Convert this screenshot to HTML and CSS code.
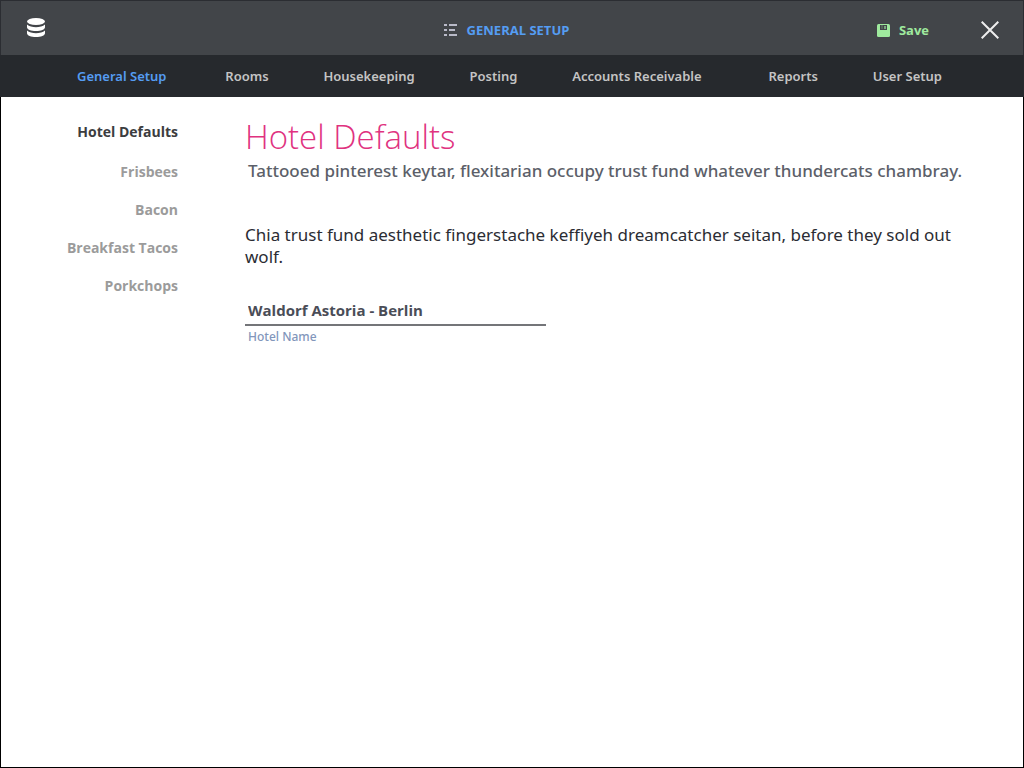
FILE: index.html
```html
<!DOCTYPE html>
<html lang="en">
<head>
<meta charset="utf-8">
<title>General Setup</title>
<link rel="stylesheet" href="styles.css">
</head>
<body>
<div class="app">
  <header class="topbar">
    <a class="logo" href="#" aria-label="Home">
      <svg width="20" height="20" viewBox="0 0 20 20" fill="currentColor" aria-hidden="true"><ellipse cx="10" cy="3.500" rx="9" ry="3.500"/><path d="M1 6.500c2 2 5.500 2.700 9 2.700s7-.7 9-2.700v2.700c0 2.300-4 3.800-9 3.800s-9-1.500-9-3.800z"/><path d="M1 12.500c2 2 5.500 2.700 9 2.700s7-.7 9-2.700v2.700c0 2.300-4 3.800-9 3.800s-9-1.500-9-3.800z"/></svg>
    </a>
    <h1 class="title">
      <svg width="13" height="12" viewBox="0 0 13 12" fill="#b9bac8" aria-hidden="true"><path d="M0 0h3v2H0zM5 0h8v2H5zM0 5h3v2H0zM5 5h6v2H5zM0 10h3v2H0zM5 10h8v2H5z"/></svg>
      <span>GENERAL SETUP</span>
    </h1>
    <div class="actions">
      <button class="save" type="button">
        <svg width="13" height="13" viewBox="0 0 13 13" aria-hidden="true"><rect width="13" height="13" rx="1.500" fill="currentColor"/><path fill="#424549" d="M3 1h7v5H3z"/><path fill="currentColor" d="M4 1h2v4H4z" opacity=".2"/><path fill="currentColor" d="M7 2h2v3H7z" opacity=".6"/></svg>
        <span>Save</span>
      </button>
      <button class="close" type="button" aria-label="Close">
        <svg width="18" height="18" viewBox="0 0 18 18" stroke="currentColor" stroke-width="2" aria-hidden="true"><path d="M.7.7l16.600 16.600M17.300.7L.7 17.300"/></svg>
      </button>
    </div>
  </header>
  <nav class="tabs" aria-label="Sections">
    <a class="tab tab-active" href="#">General Setup</a>
    <a class="tab" href="#">Rooms</a>
    <a class="tab" href="#">Housekeeping</a>
    <a class="tab" href="#">Posting</a>
    <a class="tab" href="#">Accounts Receivable</a>
    <a class="tab tab-wide" href="#">Reports</a>
    <a class="tab" href="#">User Setup</a>
  </nav>
  <div class="body">
    <nav class="side" aria-label="General setup">
      <a class="side-link side-active" href="#">Hotel Defaults</a>
      <a class="side-link" href="#">Frisbees</a>
      <a class="side-link" href="#">Bacon</a>
      <a class="side-link" href="#">Breakfast Tacos</a>
      <a class="side-link" href="#">Porkchops</a>
    </nav>
    <main class="content">
      <h2 class="heading">Hotel Defaults</h2>
      <p class="lead">Tattooed pinterest keytar, flexitarian occupy trust fund whatever thundercats chambray.</p>
      <p class="text">Chia trust fund aesthetic fingerstache keffiyeh dreamcatcher seitan, before they sold out wolf.</p>
      <div class="field">
        <input class="input" id="hotel" type="text" value="Waldorf Astoria - Berlin">
        <label class="label" for="hotel">Hotel Name</label>
      </div>
    </main>
  </div>
</div>
</body>
</html>
```
FILE: styles.css
```css
* { box-sizing: border-box; }
body { margin: 0; font-family: "Open Sans", sans-serif; background: #fff; }
a { color: inherit; text-decoration: none; }
button { border: 0; background: none; padding: 0; font: inherit; color: inherit; cursor: pointer; }
svg { display: block; flex: none; }
.app { min-height: 100vh; border: 1px solid #000; }
.topbar { display: grid; grid-template-columns: 1fr auto 1fr; align-items: center; height: 55px; margin: -1px -1px 0; padding: 0 24px 0 25px; border: 1px solid #2b2d32; border-bottom: 0; background: #424549; color: #fff; }
.logo { justify-self: start; }
.title { display: flex; align-items: center; gap: 10px; margin: 0 12px 0 0; padding-top: 4px; font-size: 13px; line-height: 18px; font-weight: 700; color: #559df3; }
.actions { justify-self: end; display: flex; align-items: center; gap: 52px; padding-top: 4px; }
.save { display: flex; align-items: center; gap: 9px; font-size: 13px; line-height: 18px; font-weight: 700; color: #9fea9e; }
.close { color: #eee; }
.tabs { display: flex; align-items: center; justify-content: space-between; height: 42px; margin: 0 -1px; padding: 0 82px 0 77px; background: #26292d; color: #c4c4c4; font-family: "Noto Sans", "Open Sans", sans-serif; font-size: 13px; line-height: 18px; font-weight: 600; }
.tab-active { margin-right: 4px; color: #559df3; }
.tab-wide { margin-left: 12px; }
.body { display: flex; gap: 67px; padding-top: 25px; }
.side { display: flex; flex-direction: column; gap: 18px; width: 177px; flex: none; text-align: right; font-size: 14px; line-height: 20px; font-weight: 700; color: #9b9b9b; }
.side-active { color: #3c3d40; margin-bottom: 2px; }
.content { flex: 1; min-width: 0; padding-right: 48px; }
.heading { margin: -2px 0 0; font-size: 33px; line-height: 34px; font-weight: 300; color: #e0327f; }
.lead { margin: 6px 0 0 3px; font-family: "Noto Sans", "Open Sans", sans-serif; font-size: 17px; line-height: 22px; font-weight: 500; color: #5c5f69; }
.text { margin: 42px 0 0; font-family: "Noto Sans", "Open Sans", sans-serif; font-size: 17px; line-height: 22px; font-weight: 400; color: #2b2c33; }
.field { display: flex; flex-direction: column; width: 301px; max-width: 100%; margin-top: 31px; }
.input { width: 100%; border: 0; border-bottom: 2px solid #747579; padding: 0 3px 3px; background: none; font: 700 15px/22px "Open Sans", sans-serif; color: #4a4d57; outline: 0; }
.label { padding: 3px 3px 0; font-family: "Noto Sans", "Open Sans", sans-serif; font-size: 12px; line-height: 16px; font-weight: 500; color: #8296bb; }
```
